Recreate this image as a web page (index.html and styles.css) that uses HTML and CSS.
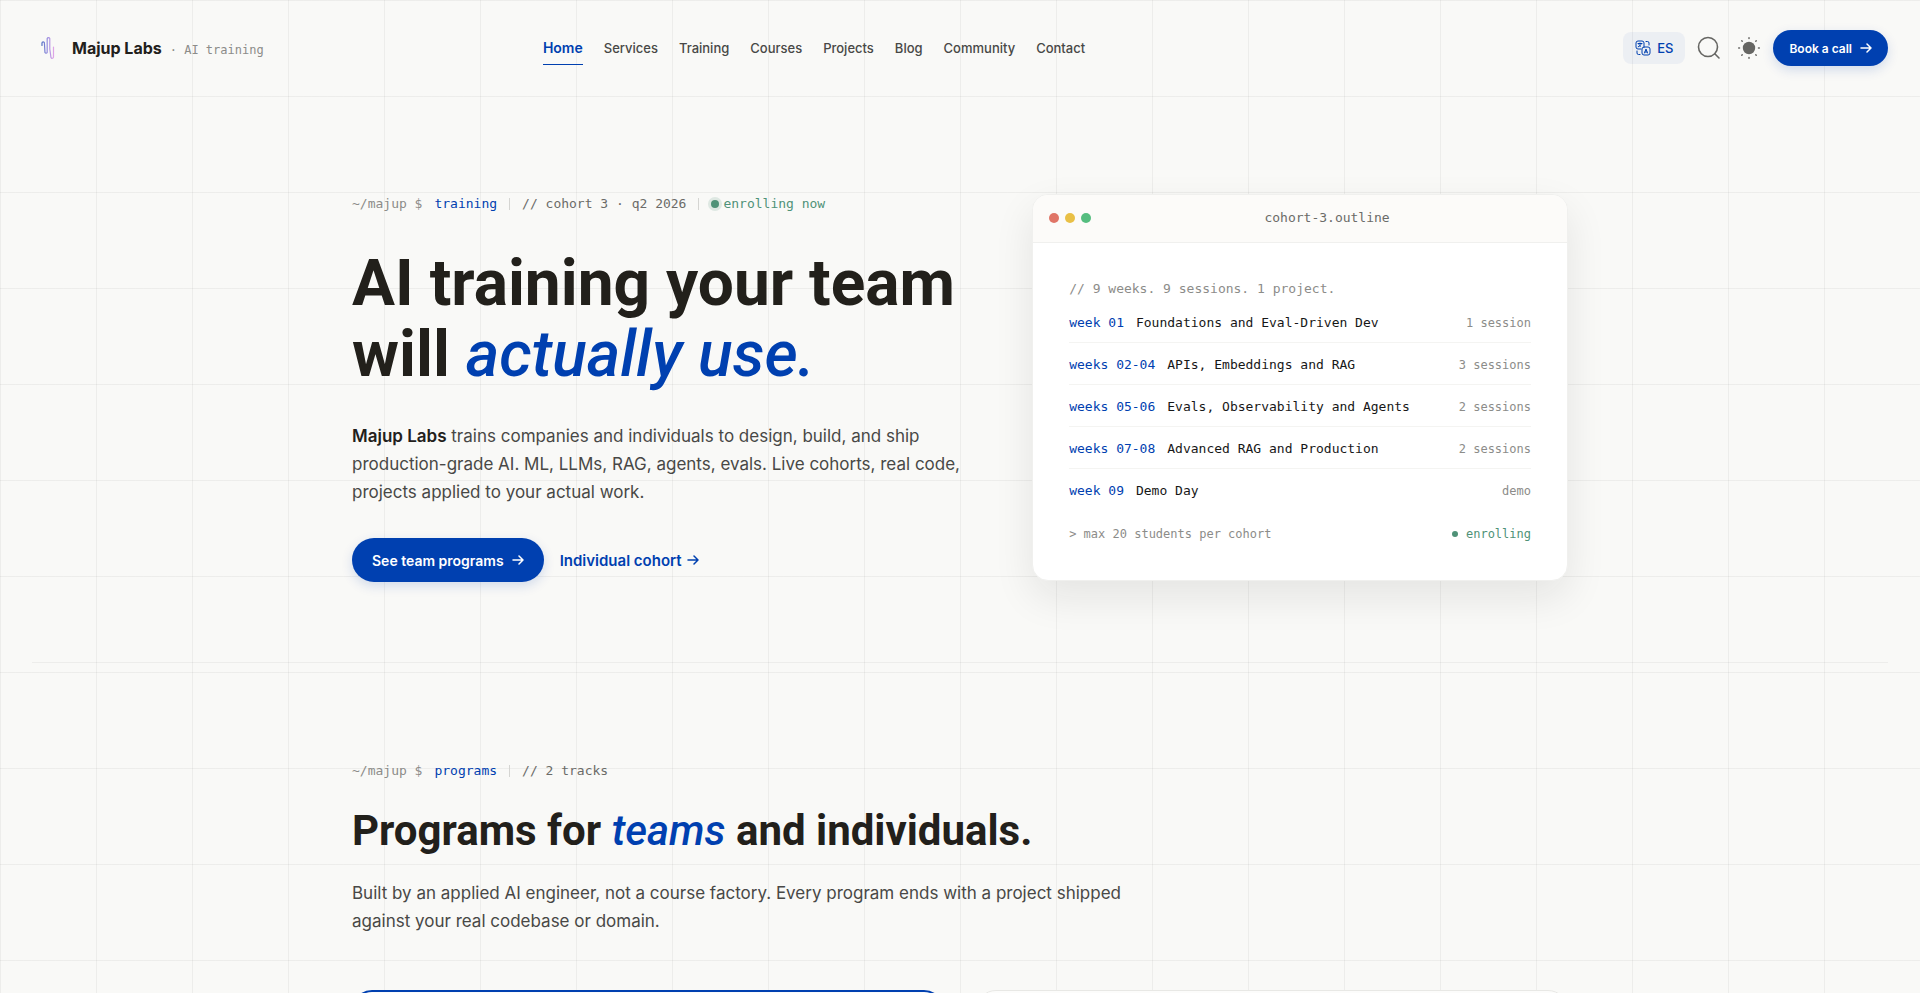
FILE: index.html
```html
<!DOCTYPE html>
<html lang="en">
<head>
<meta charset="utf-8">
<meta name="viewport" content="width=device-width, initial-scale=1">
<title>Majup Labs</title>
<link rel="stylesheet" href="styles.css">
</head>
<body>
<header class="site-header">
  <a class="brand" href="#">
    <svg class="brand-mark" viewBox="0 0 32 32" aria-hidden="true">
      <defs><linearGradient id="mark" x1="9" y1="0" x2="22" y2="0" gradientUnits="userSpaceOnUse"><stop offset="0" stop-color="#4a6cc0"/><stop offset=".5" stop-color="#9a8fe0"/><stop offset="1" stop-color="#e3a6e8"/></linearGradient></defs>
      <path d="M10 13.500V11A1.200 1.200 0 0 1 12.400 11L13 20.500A1.200 1.200 0 0 0 15.200 20.500V6.500A1.400 1.400 0 0 1 17.800 6.500V17L19 25.500A1.300 1.300 0 0 0 21.500 25V15" fill="none" stroke="url(#mark)" stroke-width="1.200" stroke-linecap="round"/>
    </svg>
    <span class="brand-name">Majup Labs</span>
    <span class="brand-tag">· AI training</span>
  </a>
  <nav class="nav" aria-label="Main">
    <a class="nav-link active" href="#">Home</a>
    <a class="nav-link" href="#">Services</a>
    <a class="nav-link" href="#">Training</a>
    <a class="nav-link" href="#">Courses</a>
    <a class="nav-link" href="#">Projects</a>
    <a class="nav-link" href="#">Blog</a>
    <a class="nav-link" href="#">Community</a>
    <a class="nav-link" href="#">Contact</a>
  </nav>
  <div class="tools">
    <button class="lang" type="button">
      <svg class="lang-icon" viewBox="0 0 16 16" aria-hidden="true" fill="none" stroke="currentColor" stroke-linecap="round" stroke-linejoin="round">
        <path d="M6 9H3a2 2 0 0 1-2-2V3a2 2 0 0 1 2-2h4a2 2 0 0 1 2 2v3"/><rect x="7" y="7" width="8" height="8" rx="2"/>
        <path d="M3 3.500h4M5 3v.5M6.200 3.500C6 5 5 6.300 3.200 6.800M4 4.500c.4 1 .9 1.400 1.600 1.800M9.500 13l1.500-4 1.500 4M10 12h2M11 1.500h1.500a1.500 1.500 0 0 1 1.500 1.500v2M5 14.500H3.500A1.500 1.500 0 0 1 2 13v-2"/>
      </svg>
      ES
    </button>
    <button class="icon-btn" type="button" aria-label="Search">
      <svg viewBox="0 0 24 24" width="24" height="24" fill="none" stroke="#666663" stroke-width="1.600" stroke-linecap="round" aria-hidden="true"><circle cx="11" cy="11" r="9.500"/><path d="M17.800 17.800L22 22"/></svg>
    </button>
    <button class="icon-btn" type="button" aria-label="Toggle theme">
      <svg viewBox="0 0 24 24" width="24" height="24" aria-hidden="true"><circle cx="12" cy="12" r="6.200" fill="#666663"/><path d="M12 1.700v.8M12 21.500v.8M1.700 12h.8M21.500 12h.8M4.800 4.800l.4.400M18.800 18.800l.4.400M19.200 4.800l-.4.400M4.800 19.200l.4-.4" stroke="#666663" stroke-width="1.500" stroke-linecap="round"/></svg>
    </button>
    <a class="btn btn-small" href="#">Book a call
      <svg class="arrow" viewBox="1 1 12 12" aria-hidden="true"><path d="M2 7h10M8 3l4 4-4 4"/></svg>
    </a>
  </div>
</header>
<main>
  <div class="hero-wrap">
    <section class="hero container">
      <div class="hero-copy">
        <p class="eyebrow"><span class="path">~/majup $</span><span class="cmd">training</span><span class="bar"></span><span>// cohort 3 · q2 2026</span><span class="bar"></span><span class="status"><span class="pulse"></span>enrolling now</span></p>
        <h1>AI training your team will <em>actually use.</em></h1>
        <p class="lead"><strong>Majup Labs</strong> trains companies and individuals to design, build, and ship production-grade AI. ML, LLMs, RAG, agents, evals. Live cohorts, real code, projects applied to your actual work.</p>
        <div class="actions">
          <a class="btn" href="#">See team programs
            <svg class="arrow" viewBox="1 1 12 12" aria-hidden="true"><path d="M2 7h10M8 3l4 4-4 4"/></svg>
          </a>
          <a class="text-link" href="#">Individual cohort
            <svg class="arrow" viewBox="1 1 12 12" aria-hidden="true"><path d="M2 7h10M8 3l4 4-4 4"/></svg>
          </a>
        </div>
      </div>
      <article class="window">
        <header class="window-bar">
          <span class="dots"><i class="dot red"></i><i class="dot yellow"></i><i class="dot green"></i></span>
          <span class="window-title">cohort-3.outline</span>
        </header>
        <div class="window-body">
          <p class="comment">// 9 weeks. 9 sessions. 1 project.</p>
          <ul class="weeks">
            <li><span class="week">week 01</span><span>Foundations and Eval-Driven Dev</span><span class="count">1 session</span></li>
            <li><span class="week">weeks 02-04</span><span>APIs, Embeddings and RAG</span><span class="count">3 sessions</span></li>
            <li><span class="week">weeks 05-06</span><span>Evals, Observability and Agents</span><span class="count">2 sessions</span></li>
            <li><span class="week">weeks 07-08</span><span>Advanced RAG and Production</span><span class="count">2 sessions</span></li>
            <li><span class="week">week 09</span><span>Demo Day</span><span class="count">demo</span></li>
          </ul>
          <footer class="window-foot"><span>&gt; max 20 students per cohort</span><span class="enrolling"><i class="mini-dot"></i>enrolling</span></footer>
        </div>
      </article>
    </section>
  </div>
  <section class="programs container">
    <p class="eyebrow"><span class="path">~/majup $</span><span class="cmd">programs</span><span class="bar"></span><span>// 2 tracks</span></p>
    <h2>Programs for <em>teams</em> and individuals.</h2>
    <p class="lead intro">Built by an applied AI engineer, not a course factory. Every program ends with a project shipped against your real codebase or domain.</p>
    <div class="tracks">
      <article class="track featured"></article>
      <article class="track"></article>
    </div>
  </section>
</main>
</body>
</html>
```
FILE: styles.css
```css
:root {
  --blue: #0040b0;
  --ink: #22201b;
  --text: #484846;
  --muted: #6b6b68;
  --faint: #8c8c89;
  --green: #4f9277;
  --line: rgba(20, 20, 20, 0.05);
  --mono: "DejaVu Sans Mono", monospace;
}

* { box-sizing: border-box; }

body {
  margin: 0;
  display: flex;
  flex-direction: column;
  height: 100vh;
  overflow: hidden;
  font-family: Inter, sans-serif;
  color: var(--text);
  background-color: #f9f9f7;
  background-image:
    linear-gradient(to right, var(--line) 1px, transparent 1px),
    linear-gradient(to bottom, var(--line) 1px, transparent 1px);
  background-size: 96px 96px;
}

a { color: inherit; text-decoration: none; }
p, h1, h2, ul { margin: 0; padding: 0; }
button { font: inherit; border: 0; background: none; padding: 0; cursor: pointer; }

.container { width: 100%; max-width: 1280px; margin: 0 auto; padding-left: 32px; padding-right: 32px; }

.site-header {
  display: grid;
  flex: none;
  grid-template-columns: 7fr auto 11fr;
  align-items: center;
  height: 96px;
  padding: 0 32px;
}
.brand { display: flex; align-items: center; gap: 8px; white-space: nowrap; }
.brand-mark { width: 32px; height: 32px; }
.brand-name { font-size: 16px; font-weight: 700; color: var(--ink); }
.brand-tag { font: 12px var(--mono); color: var(--faint); padding-top: 3px; }

.nav { display: flex; align-items: center; gap: 21px; font-size: 13px; font-weight: 500; }
.nav-link { padding: 8px 0; border-bottom: 1px solid transparent; }
.nav-link.active { font-size: 14px; font-weight: 600; color: var(--blue); border-color: var(--blue); }

.tools { display: flex; justify-content: flex-end; align-items: center; gap: 8px; }
.lang {
  display: flex; align-items: center; gap: 6px;
  height: 32px; padding: 0 12px;
  border-radius: 8px;
  font-size: 13px; font-weight: 500;
  color: var(--blue);
  background: rgba(0, 64, 176, 0.05);
}
.lang-icon { width: 16px; height: 16px; }
.icon-btn { display: flex; width: 32px; justify-content: center; }

.btn {
  display: inline-flex; align-items: center; gap: 8px;
  height: 44px; padding: 0 20px;
  border-radius: 22px;
  background: var(--blue); color: #fff;
  font-size: 14px; font-weight: 600;
  box-shadow: 0 4px 12px rgba(0, 64, 176, 0.16);
  white-space: nowrap;
}
.btn-small { height: 36px; padding: 0 16px; font-size: 12px; }
.arrow { width: 12px; height: 12px; fill: none; stroke: currentColor; stroke-width: 1.5; stroke-linecap: round; stroke-linejoin: round; }

main { flex: 1; min-height: 0; display: flex; flex-direction: column; }
.hero-wrap { margin: 0 32px; border-bottom: 1px solid var(--line); }
.hero {
  display: grid;
  grid-template-columns: 1.15fr 1fr;
  gap: 64px;
  align-items: center;
  padding-top: 96px;
  padding-bottom: 80px;
}

.eyebrow { display: flex; align-items: center; font: 13px/24px var(--mono); color: var(--muted); white-space: nowrap; }
.path { color: var(--faint); margin-right: 12px; }
.cmd { color: var(--blue); }
.bar { width: 1px; height: 12px; margin: 0 12px; background: #d5d5d2; }
.status { display: flex; align-items: center; gap: 4px; color: var(--green); }
.pulse { width: 8px; height: 8px; border-radius: 50%; background: var(--green); box-shadow: 0 0 0 3px rgba(79, 146, 119, 0.16); }

h1, h2 { font-family: Roboto, sans-serif; color: var(--ink); font-weight: 700; }
h1 { font-size: 64px; line-height: 71px; margin-top: 32px; }
h2 { font-size: 42px; line-height: 48px; margin-top: 24px; }
em { color: var(--blue); font-weight: 500; }

.lead { font-size: 17px; line-height: 28px; margin-top: 32px; }
.lead strong { color: var(--ink); font-weight: 600; }
.actions { display: flex; align-items: center; gap: 16px; margin-top: 32px; }
.text-link { display: inline-flex; align-items: center; gap: 5px; font-size: 15px; font-weight: 600; color: var(--blue); }

.window {
  border: 1px solid #f0f0ee;
  border-radius: 16px;
  overflow: hidden;
  background: #fff;
  font: 13px/20px var(--mono);
  box-shadow: 0 16px 40px rgba(20, 20, 20, 0.09);
}
.window-bar {
  display: flex; align-items: center; gap: 12px;
  height: 48px; padding: 0 16px;
  background: #fcfbf9;
  border-bottom: 1px solid #f0f0ee;
}
.dots { display: flex; gap: 6px; }
.dot { width: 10px; height: 10px; border-radius: 50%; }
.red { background: #e07567; }
.yellow { background: #e9c046; }
.green { background: #55bd7f; }
.window-title { flex: 1; text-align: center; color: var(--muted); }
.window-body { padding: 36px; }
.comment { color: var(--faint); margin-bottom: 4px; }
.weeks { list-style: none; }
.weeks li { display: flex; align-items: center; gap: 12px; padding: 12px 0 9px; color: #171717; border-bottom: 1px solid #f4f4f2; white-space: nowrap; }
.weeks li:first-child { padding-top: 10px; }
.weeks li:last-child { border-bottom: 0; }
.week { color: var(--blue); }
.count { margin-left: auto; font-size: 12px; color: var(--faint); }
.window-foot { display: flex; justify-content: space-between; font-size: 12px; color: var(--faint); margin-top: 14px; }
.enrolling { display: flex; align-items: center; gap: 8px; color: var(--green); }
.mini-dot { width: 6px; height: 6px; border-radius: 50%; background: var(--green); }

.programs { flex: 1; min-height: 0; display: flex; flex-direction: column; padding-top: 96px; }
.intro { max-width: 800px; margin-top: 24px; }
.tracks { flex: 1; min-height: 0; display: grid; grid-template-columns: 1fr 1fr; gap: 32px; margin-top: 55px; overflow: hidden; }
.track { min-height: 200px; border: 1px solid #e8e8e5; border-radius: 20px; background: #fcfcfb; }
.featured { border: 2px solid var(--blue); background: #f9fafb; }
```
